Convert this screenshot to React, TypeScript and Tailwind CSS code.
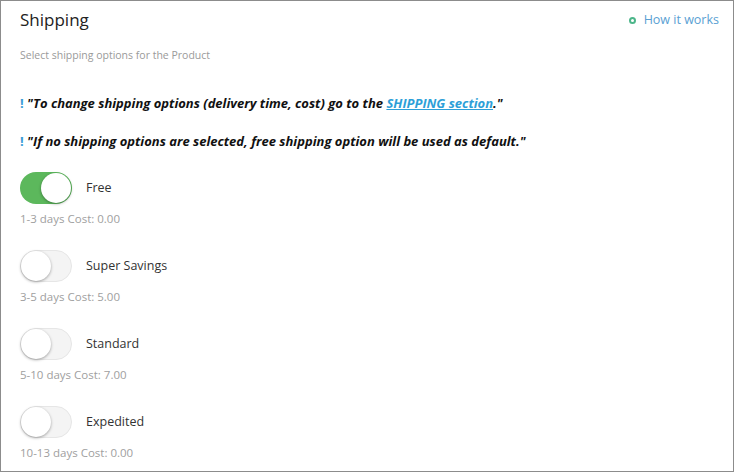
import React from "react"

type ShippingOption = {
  name: string
  days: string
  cost: string
  enabled: boolean
}

const options: ShippingOption[] = [
  { name: "Free", days: "1-3 days", cost: "0.00", enabled: true },
  { name: "Super Savings", days: "3-5 days", cost: "5.00", enabled: false },
  { name: "Standard", days: "5-10 days", cost: "7.00", enabled: false },
  { name: "Expedited", days: "10-13 days", cost: "0.00", enabled: false },
]

function Toggle({ on }: { on: boolean }) {
  return (
    <div
      className={
        on
          ? "relative h-[32px] w-[52px] shrink-0 rounded-full bg-[#5cb85c]"
          : "relative h-[32px] w-[52px] shrink-0 rounded-full border border-[#e6e6e6] bg-[#f4f4f4]"
      }
    >
      <span
        className={
          on
            ? "absolute right-[1px] top-[1px] h-[30px] w-[30px] rounded-full bg-white shadow-[0_1px_3px_rgba(0,0,0,0.35)]"
            : "absolute left-0 top-0 h-[30px] w-[30px] rounded-full bg-white shadow-[0_1px_3px_rgba(0,0,0,0.35)]"
        }
      />
    </div>
  )
}

export default function App() {
  return (
    <div
      className="h-[472px] w-[734px] border border-[#8c8c8c] bg-white pl-[19px] pr-[14px] text-[#333]"
      style={{ fontFamily: '"Open Sans", "Liberation Sans", sans-serif' }}
    >
      <div className="flex items-center justify-between pt-[6px]">
        <h1 className="text-[17px] leading-[26px] text-[#222]">Shipping</h1>
        <a className="flex items-center gap-[8px] text-[12.5px] text-[#5a9fd3]">
          <span className="h-[7px] w-[7px] rounded-full border-[2px] border-[#4db68a]" />
          How it works
        </a>
      </div>
      <p className="mt-[15px] text-[10.5px] leading-[14px] text-[#9a9a9a]">
        Select shipping options for the Product
      </p>

      <div className="mt-[33px] flex flex-col gap-[22px] text-[13px] font-bold italic leading-[16px] text-[#111]">
        <p>
          <span className="not-italic text-[#3a9bd6]">!</span> "To change shipping options (delivery time, cost) go to the{" "}
          <a className="text-[#2d9fd8] underline">SHIPPING section</a>."
        </p>
        <p>
          <span className="not-italic text-[#3a9bd6]">!</span> "If no shipping options are selected, free shipping option will be used as default."
        </p>
      </div>

      <div className="mt-[23px] flex flex-col gap-[24px]">
        {options.map((opt) => (
          <div key={opt.name} className="flex flex-col gap-[8px]">
            <div className="flex items-center gap-[14px]">
              <Toggle on={opt.enabled} />
              <span className="text-[12.5px] text-[#333]">{opt.name}</span>
            </div>
            <p className="text-[11.5px] leading-[14px] text-[#a0a0a0]">
              {opt.days} Cost: {opt.cost}
            </p>
          </div>
        ))}
      </div>
    </div>
  )
}
